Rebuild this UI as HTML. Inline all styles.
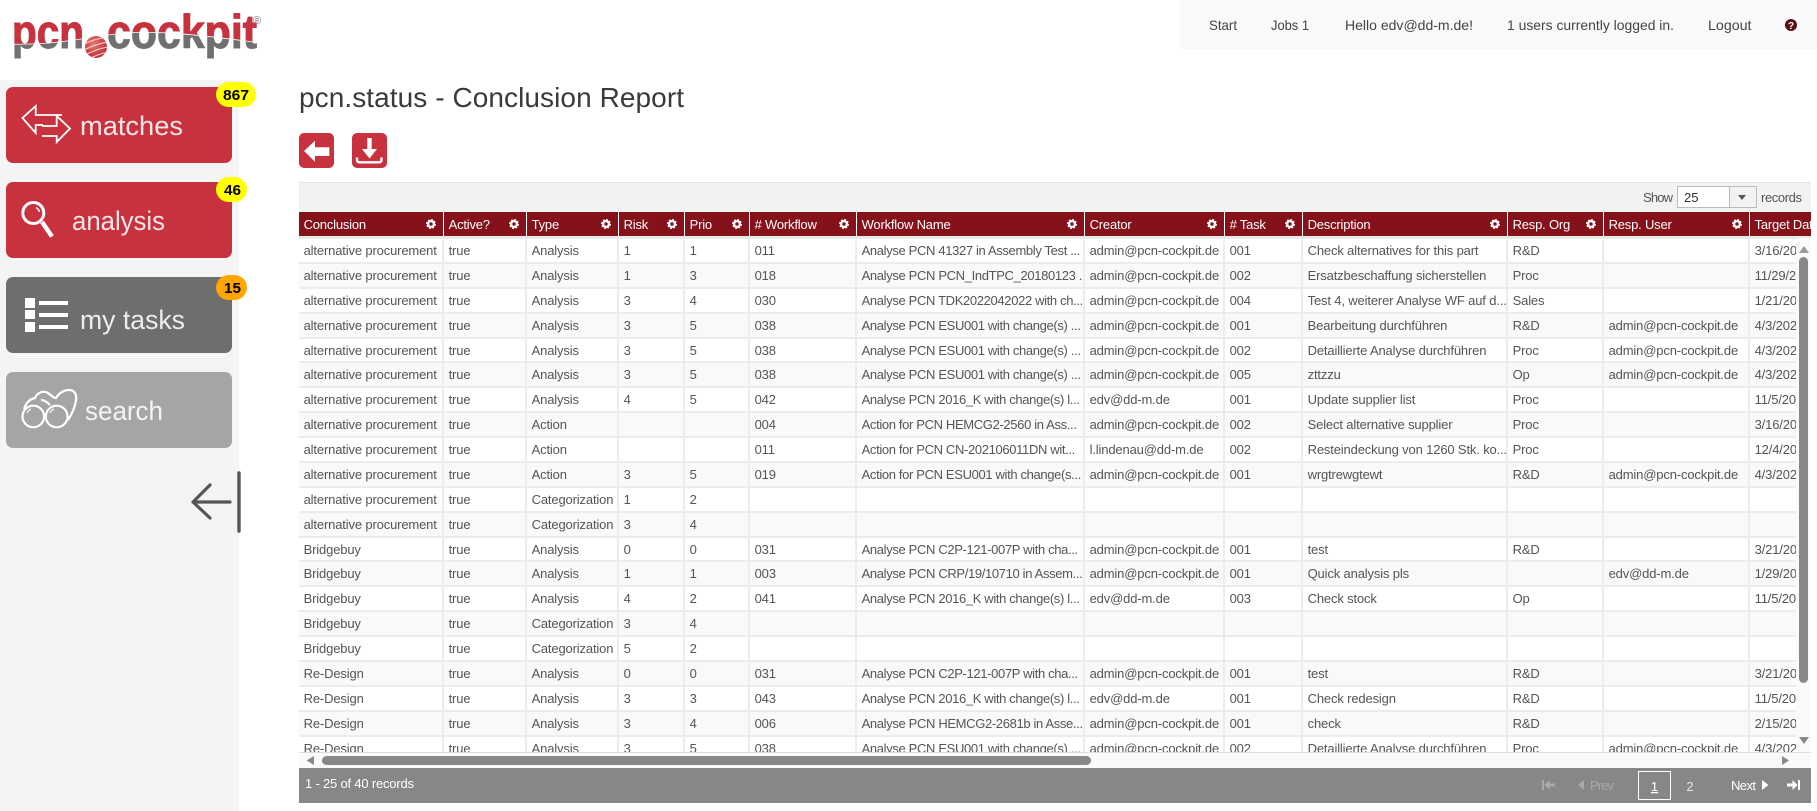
<!DOCTYPE html>
<html><head><meta charset="utf-8"><title>pcn.status - Conclusion Report</title>
<style>
html,body{margin:0;padding:0;background:#fff}
body{width:1817px;height:811px;overflow:hidden;position:relative;font-family:"Liberation Sans",sans-serif}
#side{position:absolute;left:0;top:80px;width:239px;height:731px;background:#f4f4f4}
#nav{position:absolute;left:1180px;top:0;width:637px;height:49px;background:#f8f9fa}
#show{position:absolute;left:299px;top:182px;width:1512px;height:30px;background:#f2f2f2;border-top:1px solid #e2e2e2;box-sizing:border-box}
#tb{position:absolute;left:299px;top:212px;width:1512px;height:540px;overflow:hidden;font-size:13px;letter-spacing:-.15px;color:#555;background:#fff}
.r,.h{display:grid;grid-template-columns:145px 83px 92px 66px 65px 107px 228px 140px 78px 205px 96px 146px 62px}
.h{height:24px;background:#85121a;color:#fff;line-height:25px;letter-spacing:-.2px}
.h span{position:relative;border-right:1px solid #fff;padding-left:4.6px;box-sizing:border-box;overflow:hidden;white-space:nowrap}
.h span svg{position:absolute;right:7px;top:7px;width:10px;height:10px}
.g{height:3px;background:#e8e8e8}
.r{height:24.89px;line-height:24px;box-sizing:border-box;border-bottom:2px solid #ececec}
.r:nth-child(even){background:#f9f9f9}
.r span{border-right:2px solid #ececec;padding-left:4.6px;box-sizing:border-box;overflow:hidden;white-space:nowrap}
.r span:nth-child(7){letter-spacing:-.35px}
#ov{position:absolute;left:0;top:0;width:1817px;height:811px}
text{font-family:"Liberation Sans",sans-serif}
</style></head><body>
<div id="side"></div>
<div id="nav"></div>
<div id="show"></div>
<div id="tb">
<svg width="0" height="0" style="position:absolute"><defs><g id="gear"><circle cx="5" cy="5" r="2.9" fill="none" stroke="#fff" stroke-width="2.3"/><circle cx="5" cy="5" r="4.3" fill="none" stroke="#fff" stroke-width="1.3" stroke-dasharray="1.9 1.48"/></g></defs></svg>
<div class="h"><span>Conclusion<svg viewBox="0 0 10 10"><use href="#gear"/></svg></span><span>Active?<svg viewBox="0 0 10 10"><use href="#gear"/></svg></span><span>Type<svg viewBox="0 0 10 10"><use href="#gear"/></svg></span><span>Risk<svg viewBox="0 0 10 10"><use href="#gear"/></svg></span><span>Prio<svg viewBox="0 0 10 10"><use href="#gear"/></svg></span><span># Workflow<svg viewBox="0 0 10 10"><use href="#gear"/></svg></span><span>Workflow Name<svg viewBox="0 0 10 10"><use href="#gear"/></svg></span><span>Creator<svg viewBox="0 0 10 10"><use href="#gear"/></svg></span><span># Task<svg viewBox="0 0 10 10"><use href="#gear"/></svg></span><span>Description<svg viewBox="0 0 10 10"><use href="#gear"/></svg></span><span>Resp. Org<svg viewBox="0 0 10 10"><use href="#gear"/></svg></span><span>Resp. User<svg viewBox="0 0 10 10"><use href="#gear"/></svg></span><span>Target Date</span></div>
<div class="g"></div>
<div id="rows">
<div class="r"><span>alternative procurement</span><span>true</span><span>Analysis</span><span>1</span><span>1</span><span>011</span><span>Analyse PCN 41327 in Assembly Test ...</span><span>admin@pcn-cockpit.de</span><span>001</span><span>Check alternatives for this part</span><span>R&amp;D</span><span></span><span>3/16/2022</span></div>
<div class="r"><span>alternative procurement</span><span>true</span><span>Analysis</span><span>1</span><span>3</span><span>018</span><span>Analyse PCN PCN_IndTPC_20180123 ...</span><span>admin@pcn-cockpit.de</span><span>002</span><span>Ersatzbeschaffung sicherstellen</span><span>Proc</span><span></span><span>11/29/2022</span></div>
<div class="r"><span>alternative procurement</span><span>true</span><span>Analysis</span><span>3</span><span>4</span><span>030</span><span>Analyse PCN TDK2022042022 with ch...</span><span>admin@pcn-cockpit.de</span><span>004</span><span>Test 4, weiterer Analyse WF auf d...</span><span>Sales</span><span></span><span>1/21/2022</span></div>
<div class="r"><span>alternative procurement</span><span>true</span><span>Analysis</span><span>3</span><span>5</span><span>038</span><span>Analyse PCN ESU001 with change(s) ...</span><span>admin@pcn-cockpit.de</span><span>001</span><span>Bearbeitung durchführen</span><span>R&amp;D</span><span>admin@pcn-cockpit.de</span><span>4/3/2023</span></div>
<div class="r"><span>alternative procurement</span><span>true</span><span>Analysis</span><span>3</span><span>5</span><span>038</span><span>Analyse PCN ESU001 with change(s) ...</span><span>admin@pcn-cockpit.de</span><span>002</span><span>Detaillierte Analyse durchführen</span><span>Proc</span><span>admin@pcn-cockpit.de</span><span>4/3/2023</span></div>
<div class="r"><span>alternative procurement</span><span>true</span><span>Analysis</span><span>3</span><span>5</span><span>038</span><span>Analyse PCN ESU001 with change(s) ...</span><span>admin@pcn-cockpit.de</span><span>005</span><span>zttzzu</span><span>Op</span><span>admin@pcn-cockpit.de</span><span>4/3/2023</span></div>
<div class="r"><span>alternative procurement</span><span>true</span><span>Analysis</span><span>4</span><span>5</span><span>042</span><span>Analyse PCN 2016_K with change(s) l...</span><span>edv@dd-m.de</span><span>001</span><span>Update supplier list</span><span>Proc</span><span></span><span>11/5/2022</span></div>
<div class="r"><span>alternative procurement</span><span>true</span><span>Action</span><span></span><span></span><span>004</span><span>Action for PCN HEMCG2-2560 in Ass...</span><span>admin@pcn-cockpit.de</span><span>002</span><span>Select alternative supplier</span><span>Proc</span><span></span><span>3/16/2022</span></div>
<div class="r"><span>alternative procurement</span><span>true</span><span>Action</span><span></span><span></span><span>011</span><span>Action for PCN CN-202106011DN wit...</span><span>l.lindenau@dd-m.de</span><span>002</span><span>Resteindeckung von 1260 Stk. ko...</span><span>Proc</span><span></span><span>12/4/2022</span></div>
<div class="r"><span>alternative procurement</span><span>true</span><span>Action</span><span>3</span><span>5</span><span>019</span><span>Action for PCN ESU001 with change(s...</span><span>admin@pcn-cockpit.de</span><span>001</span><span>wrgtrewgtewt</span><span>R&amp;D</span><span>admin@pcn-cockpit.de</span><span>4/3/2023</span></div>
<div class="r"><span>alternative procurement</span><span>true</span><span>Categorization</span><span>1</span><span>2</span><span></span><span></span><span></span><span></span><span></span><span></span><span></span><span></span></div>
<div class="r"><span>alternative procurement</span><span>true</span><span>Categorization</span><span>3</span><span>4</span><span></span><span></span><span></span><span></span><span></span><span></span><span></span><span></span></div>
<div class="r"><span>Bridgebuy</span><span>true</span><span>Analysis</span><span>0</span><span>0</span><span>031</span><span>Analyse PCN C2P-121-007P with cha...</span><span>admin@pcn-cockpit.de</span><span>001</span><span>test</span><span>R&amp;D</span><span></span><span>3/21/2022</span></div>
<div class="r"><span>Bridgebuy</span><span>true</span><span>Analysis</span><span>1</span><span>1</span><span>003</span><span>Analyse PCN CRP/19/10710 in Assem...</span><span>admin@pcn-cockpit.de</span><span>001</span><span>Quick analysis pls</span><span></span><span>edv@dd-m.de</span><span>1/29/2022</span></div>
<div class="r"><span>Bridgebuy</span><span>true</span><span>Analysis</span><span>4</span><span>2</span><span>041</span><span>Analyse PCN 2016_K with change(s) l...</span><span>edv@dd-m.de</span><span>003</span><span>Check stock</span><span>Op</span><span></span><span>11/5/2022</span></div>
<div class="r"><span>Bridgebuy</span><span>true</span><span>Categorization</span><span>3</span><span>4</span><span></span><span></span><span></span><span></span><span></span><span></span><span></span><span></span></div>
<div class="r"><span>Bridgebuy</span><span>true</span><span>Categorization</span><span>5</span><span>2</span><span></span><span></span><span></span><span></span><span></span><span></span><span></span><span></span></div>
<div class="r"><span>Re-Design</span><span>true</span><span>Analysis</span><span>0</span><span>0</span><span>031</span><span>Analyse PCN C2P-121-007P with cha...</span><span>admin@pcn-cockpit.de</span><span>001</span><span>test</span><span>R&amp;D</span><span></span><span>3/21/2022</span></div>
<div class="r"><span>Re-Design</span><span>true</span><span>Analysis</span><span>3</span><span>3</span><span>043</span><span>Analyse PCN 2016_K with change(s) l...</span><span>edv@dd-m.de</span><span>001</span><span>Check redesign</span><span>R&amp;D</span><span></span><span>11/5/2022</span></div>
<div class="r"><span>Re-Design</span><span>true</span><span>Analysis</span><span>3</span><span>4</span><span>006</span><span>Analyse PCN HEMCG2-2681b in Asse...</span><span>admin@pcn-cockpit.de</span><span>001</span><span>check</span><span>R&amp;D</span><span></span><span>2/15/2022</span></div>
<div class="r"><span>Re-Design</span><span>true</span><span>Analysis</span><span>3</span><span>5</span><span>038</span><span>Analyse PCN ESU001 with change(s) ...</span><span>admin@pcn-cockpit.de</span><span>002</span><span>Detaillierte Analyse durchführen</span><span>Proc</span><span>admin@pcn-cockpit.de</span><span>4/3/2023</span></div>
</div>
</div>

<svg id="ov" viewBox="0 0 1817 811" xmlns="http://www.w3.org/2000/svg">
<defs>
<clipPath id="lc"><path d="M0 0H270V44C220 38 170 30 125 33C90 36 60 46 13 44Z"/></clipPath>
<clipPath id="gc"><circle cx="96" cy="47" r="11"/></clipPath>
<radialGradient id="gb" cx=".4" cy=".35" r=".7"><stop offset="0" stop-color="#e8776f"/><stop offset="1" stop-color="#bf2a2f"/></radialGradient>
</defs>
<!-- logo -->
<g font-size="47" font-weight="700" stroke-width=".9">
<text x="12" y="48" fill="#707070" stroke="#707070" textLength="72" lengthAdjust="spacingAndGlyphs">pcn</text>
<text x="107" y="48" fill="#707070" stroke="#707070" textLength="150" lengthAdjust="spacingAndGlyphs">cockpit</text>
<g clip-path="url(#lc)">
<text x="12" y="48" fill="#c8323f" stroke="#c8323f" textLength="72" lengthAdjust="spacingAndGlyphs">pcn</text>
<text x="107" y="48" fill="#c8323f" stroke="#c8323f" textLength="150" lengthAdjust="spacingAndGlyphs">cockpit</text>
</g></g>
<path d="M0 44C60 46 90 36 125 33C170 30 220 38 270 44" fill="none" stroke="#fff" stroke-width=".8"/>
<text x="253" y="24" font-size="11" fill="#777">®</text>
<circle cx="96" cy="47" r="12" fill="#fff"/>
<circle cx="96" cy="47" r="11" fill="url(#gb)"/>
<g clip-path="url(#gc)" fill="none" stroke="#fff" stroke-width="1.1" opacity=".75"><path d="M84 44C92 40 100 38 108 37M84 50C92 46 101 43 108 42M85 55C93 51 101 48 108 47M88 59C95 56 102 53 108 52"/></g>

<!-- sidebar buttons -->
<rect x="6" y="87" width="226" height="76" rx="7" fill="#c8323f"/>
<rect x="6" y="182" width="226" height="76" rx="7" fill="#c8323f"/>
<rect x="6" y="277" width="226" height="76" rx="7" fill="#6e6e6e"/>
<rect x="6" y="372" width="226" height="76" rx="7" fill="#a5a5a5"/>
<g fill="#fff" fill-opacity=".88" font-size="27">
<text x="80" y="135" textLength="103" lengthAdjust="spacingAndGlyphs">matches</text>
<text x="72" y="230" textLength="93" lengthAdjust="spacingAndGlyphs">analysis</text>
<text x="80" y="329" textLength="105" lengthAdjust="spacingAndGlyphs">my tasks</text>
<text x="85" y="420" textLength="78" lengthAdjust="spacingAndGlyphs">search</text>
</g>
<!-- matches icon -->
<g fill="none" stroke="#fff" stroke-width="1.8" stroke-linejoin="miter">
<path d="M62 115H35.7V106L22.5 118L35.7 133V125H43"/>
<path d="M42 126H56.7V116L70 128.5L56.7 142V136H42"/>
</g>
<!-- analysis icon -->
<g fill="none" stroke="#fff">
<circle cx="33.3" cy="213" r="10.5" stroke-width="3"/>
<path d="M42 222L52 236.5" stroke-width="4.5"/>
<path d="M36 207.5C38 208.5 39 210 39.5 212" stroke-width="1.5"/>
</g>
<!-- tasks icon -->
<g fill="#fff">
<rect x="25" y="298" width="10" height="10"/><rect x="25" y="310" width="10" height="9"/><rect x="25" y="322" width="10" height="10"/>
<rect x="39" y="301" width="29" height="4"/><rect x="39" y="313" width="29" height="4"/><rect x="39" y="325" width="29" height="4"/>
</g>
<!-- binoculars -->
<g fill="none" stroke="#fff" stroke-width="2.2">
<circle cx="33.3" cy="416.5" r="10.8"/><circle cx="56.7" cy="416.5" r="10.8"/>
<path d="M24 409C26 403 30 399 35 398C37 393 43 390 48 393C51 395 53 398 56 398C59 393 64 390 69 390C74 390 77 394 76 400C75 407 72 414 68 420"/>
<path d="M41 400C44 400 47 402 50 405"/>
<path d="M27 413C28 411 29 410 31 409M50 413C51 411 52 410 54 409" stroke-width="1"/>
</g>
<!-- badges -->
<rect x="216" y="82" width="40" height="25" rx="12.5" fill="#ff0"/>
<rect x="216" y="177" width="31" height="25" rx="12.5" fill="#ff0"/>
<rect x="216" y="275" width="31" height="25" rx="12.5" fill="#ffa500"/>
<g font-size="15" font-weight="700" fill="#000">
<text x="223" y="100" textLength="26" lengthAdjust="spacingAndGlyphs">867</text>
<text x="224" y="195" textLength="17" lengthAdjust="spacingAndGlyphs">46</text>
<text x="224" y="293" textLength="17" lengthAdjust="spacingAndGlyphs">15</text>
</g>
<!-- collapse arrow -->
<g fill="none" stroke="#555" stroke-linecap="round" stroke-linejoin="round">
<path d="M210 485L193 502L210 518M193 502H230" stroke-width="3.2"/>
<path d="M239 473V531" stroke-width="3.4"/>
</g>

<!-- nav -->
<g font-size="13.8" fill="#444">
<text x="1209" y="30" textLength="28" lengthAdjust="spacingAndGlyphs">Start</text>
<text x="1271" y="30" textLength="38" lengthAdjust="spacingAndGlyphs">Jobs 1</text>
<text x="1345" y="30" textLength="128" lengthAdjust="spacingAndGlyphs">Hello edv@dd-m.de!</text>
<text x="1507" y="30" textLength="167" lengthAdjust="spacingAndGlyphs">1 users currently logged in.</text>
<text x="1708" y="30" textLength="43.5" lengthAdjust="spacingAndGlyphs">Logout</text>
</g>
<circle cx="1791" cy="25" r="6" fill="#5a0f12"/>
<text x="1791" y="29" font-size="10" font-weight="700" fill="#fff" text-anchor="middle">?</text>

<!-- title -->
<text x="299" y="107" font-size="28" fill="#3a3a3a" textLength="385">pcn.status - Conclusion Report</text>
<!-- toolbar buttons -->
<rect x="299" y="133" width="35" height="35" rx="5" fill="#c8323f"/>
<rect x="352" y="133" width="35" height="35" rx="5" fill="#c8323f"/>
<path d="M304 151L315 140.7V147.3H329.3V156H315V161.7Z" fill="#fff"/>
<path d="M367.3 138H371.7V149H377L369.5 158.5L362 149H367.3Z" fill="#fff"/>
<path d="M357 157.5V160C357 161.5 358 162.3 359.5 162.3H379C380.5 162.3 381.5 161.5 381.5 160V157.5" fill="none" stroke="#fff" stroke-width="2.4"/>

<!-- show control -->
<g font-size="13" fill="#555">
<text x="1643" y="202" textLength="30">Show</text>
<text x="1761" y="202" textLength="41">records</text>
</g>
<rect x="1677.5" y="186.5" width="79" height="21" fill="#fff" stroke="#bbb"/>
<rect x="1729.5" y="186.5" width="27" height="21" fill="#f2f2f2" stroke="#bbb"/>
<text x="1684" y="202" font-size="13" fill="#333">25</text>
<path d="M1738 195H1746L1742 200Z" fill="#555"/>

<!-- vertical scrollbar -->
<rect x="1796" y="238" width="15" height="514" fill="#fafafa"/>
<path d="M1799 253L1804 246L1809 253Z" fill="#999"/>
<rect x="1799" y="257" width="9" height="426" rx="4.5" fill="#888"/>
<path d="M1799 737L1804 744L1809 737Z" fill="#888"/>
<!-- horizontal scrollbar -->
<rect x="299" y="752" width="1512" height="16" fill="#fafafa"/>
<rect x="299" y="752" width="1512" height="1" fill="#ddd"/>
<path d="M314 756V765L306.5 760.5Z" fill="#888"/>
<rect x="322" y="756" width="769" height="9" rx="4.5" fill="#888"/>
<path d="M1782 756V765L1789 760.5Z" fill="#888"/>
<!-- footer -->
<rect x="299" y="768" width="1512" height="35" fill="#878787"/>
<text x="305" y="788" font-size="13" fill="#fff" textLength="109">1 - 25 of 40 records</text>
<g fill="#aaa">
<rect x="1542" y="780" width="2" height="10"/>
<path d="M1544.5 785L1549.5 780V783.5H1555V786.5H1549.5V790Z"/>
<path d="M1584 780V790L1578 785Z"/>
<text x="1590" y="790" font-size="13" textLength="24">Prev</text>
</g>
<rect x="1638.5" y="771.5" width="32" height="28" fill="none" stroke="#fff"/>
<text x="1654.5" y="791" font-size="13" fill="#fff" text-anchor="middle" text-decoration="underline">1</text>
<text x="1690" y="791" font-size="13" fill="#e4e4e4" text-anchor="middle">2</text>
<g fill="#fff">
<text x="1731" y="790" font-size="13" textLength="25">Next</text>
<path d="M1762 780V790L1768.5 785Z"/>
<path d="M1800 780V790H1798V780ZM1797.5 785L1792.5 780V783.5H1787V786.5H1792.5V790Z"/>
</g>
</svg>
</body></html>
